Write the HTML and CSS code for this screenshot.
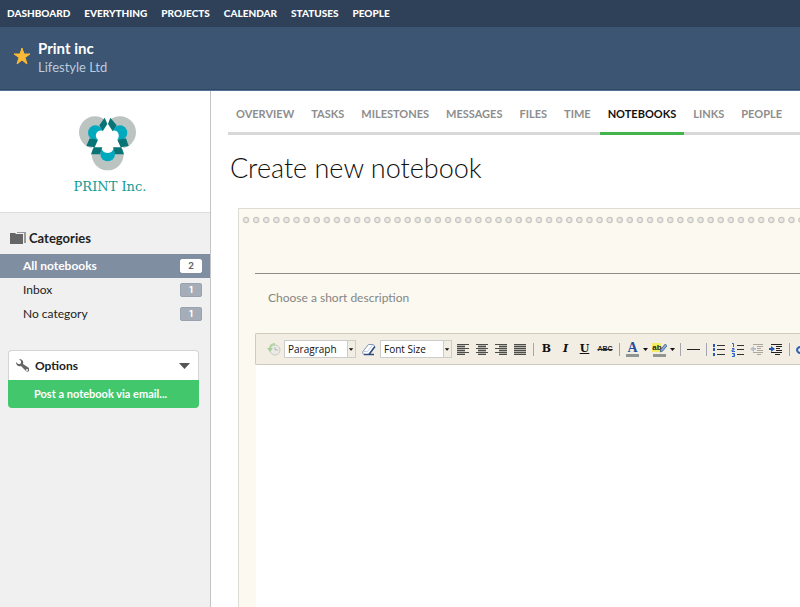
FILE: index.html
```html
<!DOCTYPE html>
<html lang="en">
<head>
<meta charset="utf-8">
<title>Create new notebook</title>
<link rel="stylesheet" href="styles.css">
</head>
<body>
<nav class="topnav">
  <a href="#">DASHBOARD</a><a href="#">EVERYTHING</a><a href="#">PROJECTS</a><a href="#">CALENDAR</a><a href="#">STATUSES</a><a href="#">PEOPLE</a>
</nav>
<header class="project">
  <svg class="star" viewBox="0 0 18 18"><path fill="#fdb935" stroke="#fdb935" stroke-linejoin="round" d="M9 1l2 6h6l-5 3.500 2 6.500-5-4-5 4 2-6.500L1 7h6z"/></svg>
  <div>
    <div class="project-name">Print inc</div>
    <div class="project-company">Lifestyle Ltd</div>
  </div>
</header>
<div class="layout">
  <aside class="sidebar">
    <div class="brand">
      <svg class="brand-mark" viewBox="233 74 177 168">
        <g fill="#bcc4c2"><circle cx="284" cy="126" r="48"/><circle cx="359" cy="126" r="48"/><circle cx="322" cy="192" r="48"/></g>
        <path fill="#fff" d="M322 88l50 88H272z"/>
        <g fill="#00a9bd"><circle cx="285" cy="127" r="22"/><circle cx="359" cy="127" r="22"/><circle cx="322" cy="191" r="22"/></g>
        <path fill="#fff" d="M321 99l16 22c9-2 17 3 18 12 1 7-1 11-5 15l12 23h-24c3 9-5 17-16 17s-20-8-17-17h-23l12-23c-6-3-9-9-7-16 2-8 10-13 19-11z"/>
        <path fill="#fff" d="M313 74h17v9l-8 15-9-15z"/>
        <path fill="#087476" d="M313 82l8 19-14 22-10-18zM330 82l19 23-12 18-14-22zM268 144l25 4-10 23-25-4zM351 148l26-4 8 23-24 4zM280 171h26l-7 21h-27zM338 171h25l8 21h-27z"/>
      </svg>
      <div class="brand-name">PRINT Inc.</div>
    </div>
    <h2 class="side-title">
      <svg class="folder" viewBox="0 0 16 12"><path fill="#666" d="M0 1h5l1 1h7v10H0z"/><path fill="#999" d="M7 0h9v11h-2V1H7z"/></svg>
      Categories
    </h2>
    <ul class="categories">
      <li><a class="current" href="#">All notebooks <span class="count">2</span></a></li>
      <li><a href="#">Inbox <span class="count">1</span></a></li>
      <li><a href="#">No category <span class="count">1</span></a></li>
    </ul>
    <div class="options">
      <button class="options-toggle" type="button">
        <svg class="wrench" viewBox="0 0 13 13"><path fill="#666" d="M3 0l2 2v2L4 5H2L0 3c0 3 2 5 5 4l5 5c1 1 2 1 3 0s1-2 0-3L7 5c1-3-1-5-4-5z"/><circle cx="11" cy="11" r="1" fill="#fff"/></svg>
        <span>Options</span>
        <svg class="toggle-arrow" viewBox="0 0 11 6"><path fill="#555" d="M0 0h11L5.500 6z"/></svg>
      </button>
      <a class="options-post" href="#">Post a notebook via email...</a>
    </div>
  </aside>
  <main class="content">
    <nav class="tabs">
      <a href="#">OVERVIEW</a><a href="#">TASKS</a><a href="#">MILESTONES</a><a href="#">MESSAGES</a><a href="#">FILES</a><a href="#">TIME</a><a class="active" href="#">NOTEBOOKS</a><a href="#">LINKS</a><a href="#">PEOPLE</a>
    </nav>
    <h1 class="title">Create new notebook</h1>
    <form class="paper">
      <svg class="holes">
        <defs><pattern id="hole" width="10.1" height="8" patternUnits="userSpaceOnUse"><circle cx="5" cy="4" r="2.600" fill="#ebebed" stroke="#c6c5bd" stroke-width="1.300"/></pattern></defs>
        <rect width="100%" height="8" fill="url(#hole)"/>
      </svg>
      <input class="name" type="text" aria-label="Notebook name">
      <input class="description" type="text" aria-label="Description" placeholder="Choose a short description">
      <div class="editor">
        <div class="toolbar">
          <button class="tool history" type="button" aria-label="Restore draft"><svg viewBox="0 0 15 15"><circle cx="8" cy="8" r="5" fill="#ebebe8" stroke="#c9c9c4"/><path d="M8 5v3h3" fill="none" stroke="#b5b5ae"/><path d="M8 2C4 2 3 5 3 7" fill="none" stroke="#b3d4a3" stroke-width="2"/><path fill="#a9cf98" d="M0 6h6L3 10z"/></svg></button>
          <span class="picker"><select aria-label="Format"><option>Paragraph</option></select><svg class="picker-arrow" viewBox="0 0 8 16"><path fill="#111" d="M1 7h5L3.500 10z"/></svg></span>
          <button class="tool eraser" type="button" aria-label="Remove formatting"><svg viewBox="0 0 15 15"><path d="M1.500 10l6-7.500h5l1 2-6 8h-5z" fill="#fff" stroke="#8195b8"/><path d="M3 12.500h5l6-8M8 12.500h5" fill="none" stroke="#304d82" stroke-width="1.500"/><path d="M2 9.500h4.500l5.500-7" fill="none" stroke="#c3d1e8"/></svg></button>
          <span class="picker"><select aria-label="Font size"><option>Font Size</option></select><svg class="picker-arrow" viewBox="0 0 8 16"><path fill="#111" d="M1 7h5L3.500 10z"/></svg></span>
          <span class="group">
            <button class="tool" type="button" aria-label="Align left"><svg viewBox="0 0 15 15"><path fill="#b5b3ab" d="M1 3h8v10H1z"/><path stroke="#4d4d49" d="M1 2.500h12M1 4.500h8M1 6.500h12M1 8.500h8M1 10.500h12M1 12.500h8"/></svg></button>
            <button class="tool" type="button" aria-label="Align centre"><svg viewBox="0 0 15 15"><path fill="#b5b3ab" d="M3 3h8v10H3z"/><path stroke="#4d4d49" d="M1 2.500h12M3 4.500h8M1 6.500h12M3 8.500h8M1 10.500h12M3 12.500h8"/></svg></button>
            <button class="tool" type="button" aria-label="Align right"><svg viewBox="0 0 15 15"><path fill="#b5b3ab" d="M5 3h8v10H5z"/><path stroke="#4d4d49" d="M1 2.500h12M5 4.500h8M1 6.500h12M5 8.500h8M1 10.500h12M5 12.500h8"/></svg></button>
            <button class="tool" type="button" aria-label="Justify"><svg viewBox="0 0 15 15"><path fill="#b5b3ab" d="M1 3h12v10H1z"/><path stroke="#4d4d49" d="M1 2.500h12M1 4.500h12M1 6.500h12M1 8.500h12M1 10.500h12M1 12.500h12"/></svg></button>
          </span>
          <span class="group">
            <button class="tool letter" type="button"><b>B</b></button>
            <button class="tool letter" type="button"><i>I</i></button>
            <button class="tool letter" type="button"><u>U</u></button>
            <button class="tool strike" type="button"><s>ABC</s></button>
          </span>
          <span class="group">
            <button class="tool ink" type="button">A</button>
            <button class="caret" type="button" aria-label="Text colours"><svg viewBox="0 0 8 8"><path fill="#111" d="M1 3h5L3.500 6z"/></svg></button>
            <button class="tool marker" type="button">ab<svg class="pen" viewBox="0 0 8 11"><path d="M0 10l1-3 5-6 2 2-5 6z" fill="#87acd9" stroke="#42658f"/></svg></button>
            <button class="caret" type="button" aria-label="Highlight colours"><svg viewBox="0 0 8 8"><path fill="#111" d="M1 3h5L3.500 6z"/></svg></button>
          </span>
          <span class="group">
            <button class="tool" type="button" aria-label="Horizontal rule"><svg viewBox="0 0 15 15"><path stroke="#222" d="M1 7.500h13"/></svg></button>
          </span>
          <span class="group">
            <button class="tool" type="button" aria-label="Bulleted list"><svg viewBox="0 0 15 15"><path stroke="#333" d="M5 3.500h8M5 7.500h8M5 12.500h8"/><path fill="#2857b8" d="M1 2h2v3H1zM1 6h2v3H1zM1 11h2v3H1z"/></svg></button>
            <button class="tool" type="button" aria-label="Numbered list"><svg viewBox="0 0 15 15"><path stroke="#333" d="M6 3.500h7M6 7.500h7M6 12.500h7"/><path fill="none" stroke="#2b62cd" d="M1 1.500h1.500V5M1 6.500h2v1.500h-2v1.500h3M1 11.500h2.500v3H1M2 13h2"/></svg></button>
            <button class="tool" type="button" aria-label="Outdent"><svg viewBox="0 0 15 15"><path stroke="#aaa79e" d="M3 2.500h10M7 4.500h6M7 6.500h4M7 8.500h6M3 10.500h10M7 12.500h4"/><path fill="#b7bfcc" d="M0 7l4-3v2h2v2H4v2z"/></svg></button>
            <button class="tool" type="button" aria-label="Indent"><svg viewBox="0 0 15 15"><path stroke="#222" d="M2 2.500h11M7 4.500h6M7 6.500h4M7 8.500h6M2 10.500h11M6 12.500h5"/><path fill="#2557b5" d="M6 7L2 4v2H0v2h2v2z"/></svg></button>
          </span>
          <span class="group">
            <button class="tool" type="button" aria-label="Insert link"><svg viewBox="0 0 15 15"><ellipse cx="6" cy="8" rx="4" ry="3" fill="none" stroke="#2c62b6" stroke-width="2"/></svg></button>
          </span>
        </div>
        <textarea class="body" aria-label="Notebook content"></textarea>
      </div>
    </form>
  </main>
</div>
</body>
</html>
```
FILE: styles.css
```css
* { box-sizing: border-box; }
html, body { height: 100%; }
body {
  margin: 0;
  display: flex;
  flex-direction: column;
  overflow: hidden;
  font-family: Lato, "Open Sans", sans-serif;
  color: #222;
  background: #fff;
}
a { color: inherit; text-decoration: none; }
button, input, select, textarea { font: inherit; color: inherit; margin: 0; padding: 0; border: 0; background: none; outline: 0; }
svg { display: block; flex: none; }

.topnav {
  flex: none;
  display: flex;
  gap: 14px;
  height: 27px;
  padding: 0 7px 2px;
  align-items: center;
  background: #2f4159;
  color: #fff;
  font-size: 10px;
  line-height: 16px;
  font-weight: 900;
}
.project {
  flex: none;
  display: flex;
  gap: 7px;
  height: 64px;
  padding: 11px 13px;
  background: #3b5573;
  border-bottom: 1px solid #566f96;
  box-shadow: inset 0 -1px #2f4866;
  color: #fff;
}
.star { width: 18px; height: 18px; margin-top: 9px; }
.project-name { font-size: 15px; line-height: 20px; font-weight: 700; }
.project-company { font-size: 13px; line-height: 18px; color: #bccbdf; }

.layout { flex: 1; min-height: 0; display: flex; }
.sidebar { flex: none; width: 211px; background: #f0f0f0; border-right: 1px solid #c4c4c8; }
.brand {
  height: 122px;
  padding-top: 24px;
  display: flex;
  flex-direction: column;
  align-items: center;
  background: #fff;
  border-bottom: 1px solid #ddd;
}
.brand-mark { width: 59px; height: 56px; margin-left: 4px; }
.brand-name { margin-left: 10px; padding-top: 6px; color: #129b99; font: 13px/20px "DejaVu Serif", serif; }
.side-title {
  display: flex;
  align-items: center;
  gap: 3px;
  margin: 0;
  padding: 15px 10px 6px;
  font-size: 13px;
  line-height: 20px;
  font-weight: 700;
}
.folder { width: 16px; height: 12px; }
.categories { list-style: none; margin: 0; padding: 0; }
.categories a {
  display: flex;
  align-items: center;
  justify-content: space-between;
  height: 24px;
  padding: 0 8px 1px 23px;
  font-size: 12px;
}
.categories .current { background: #808ea2; color: #fff; font-weight: 700; }
.count {
  width: 22px;
  height: 14px;
  border-radius: 2px;
  background: #a5adb9;
  border: 1px solid #9aa2ad;
  color: #fff;
  font: 700 9px/12px Inter, sans-serif;
  text-align: center;
}
.current .count { background: #fff; border-color: #fff; color: #666; }
.options { margin: 24px 11px 0 8px; }
.options-toggle {
  display: flex;
  align-items: center;
  gap: 6px;
  width: 100%;
  height: 30px;
  padding: 0 8px 0 7px;
  background: #fff;
  border: 1px solid #d4d4d4;
  border-bottom: 0;
  border-radius: 4px 4px 0 0;
  font-size: 12px;
  line-height: 16px;
  font-weight: 700;
}
.wrench { width: 13px; height: 13px; }
.toggle-arrow { width: 11px; height: 6px; margin-left: auto; }
.options-post {
  display: block;
  padding-left: 26px;
  background: #43c76d;
  border-radius: 0 0 4px 4px;
  color: #fff;
  font-size: 11px;
  line-height: 28px;
  font-weight: 700;
}

.content { flex: 1; min-width: 0; display: flex; flex-direction: column; padding-left: 17px; }
.tabs {
  flex: none;
  display: flex;
  gap: 1px;
  height: 44px;
  box-shadow: inset 0 -3px #d8d8d8;
  font-size: 11px;
  line-height: 46px;
  font-weight: 700;
  color: #8d8d8d;
}
.tabs a { padding: 0 8px; white-space: nowrap; }
.tabs .active { color: #111; box-shadow: inset 0 -3px #43b34b; }
.title { margin: 0; padding: 15px 2px 22px; font-size: 27px; line-height: 36px; font-weight: 300; color: #111; }
.paper {
  flex: 1;
  display: flex;
  flex-direction: column;
  margin-left: 10px;
  padding-top: 7px;
  background: #fcf9f0;
  border: 1px solid #dbdcd3;
  border-width: 1px 0 0 1px;
}
.holes { width: 100%; height: 8px; padding-left: 2px; }
.name {
  height: 50px;
  margin-left: 16px;
  padding: 0 12px;
  border-bottom: 1px solid #8e8d87;
  font-size: 18px;
}
.description { height: 20px; margin: 13px 0 26px 16px; padding: 0 13px; font-size: 12px; }
.description::placeholder { color: #858583; opacity: 1; }
.editor { flex: 1; display: flex; flex-direction: column; margin-left: 16px; overflow: hidden; }
.toolbar {
  flex: none;
  display: flex;
  align-items: center;
  height: 32px;
  padding-left: 9px;
  background: #f2eee3;
  border: 1px solid #cfccbe;
  border-right: 0;
  border-radius: 2px 0 0 2px;
}
.body { flex: 1; margin-left: 1px; padding: 8px; background: #fff; resize: none; }
.tool { flex: none; width: 19px; height: 22px; display: flex; align-items: center; justify-content: center; }
.tool svg { width: 15px; height: 15px; }
.tool.eraser { width: 24px; }
.picker { flex: none; display: flex; position: relative; width: 72px; height: 18px; }
.picker select {
  appearance: none;
  width: 100%;
  height: 18px;
  padding: 0 10px 0 3px;
  border: 1px solid #ccc;
  border-radius: 0;
  background: #fff;
  color: #111;
  font: 10px/16px "Open Sans", sans-serif;
}
.picker-arrow { position: absolute; top: 1px; right: 1px; width: 8px; height: 16px; background: #f2eee3; border-left: 1px solid #ccc; pointer-events: none; }
.group { display: flex; flex: none; align-items: center; }
.picker + .group { margin-left: 2px; }
.group + .group::before { content: ""; width: 1px; height: 13px; margin: 0 3px; background: #a5a6ad; }
.letter { font: 700 11px/16px "DejaVu Serif", serif; color: #111; }
.strike { width: 22px; font: 700 7px/12px "Liberation Sans", sans-serif; color: #222; }
.caret { width: 8px; height: 16px; }
.caret svg { width: 8px; height: 8px; }
.tool.ink, .tool.marker {
  height: 16px;
  background: linear-gradient(#8f9693, #8f9693) center bottom / 13px 3px no-repeat;
  padding-bottom: 3px;
  color: #264f99;
  font: 700 14px/13px "Liberation Serif", serif;
}
.tool.marker {
  background: linear-gradient(#8f9693, #8f9693) center bottom / 13px 3px no-repeat, linear-gradient(#f5ec62, #f5ec62) 2px 2px / 9px 9px no-repeat;
  color: #222;
  font: 700 8px/10px "Liberation Sans", sans-serif;
}
.tool .pen { width: 7px; height: 10px; margin-left: -2px; }
```
